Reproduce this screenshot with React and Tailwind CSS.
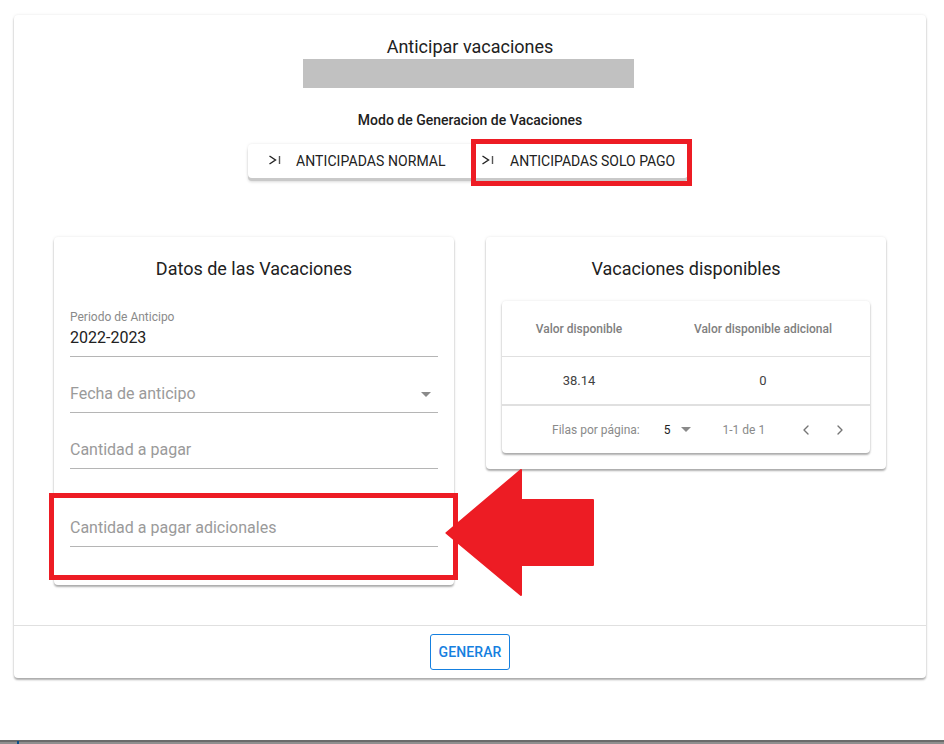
import React from "react";
import { ChevronLeft, ChevronRight } from "lucide-react";

function SkipIcon() {
  return (
    <svg width="14" height="14" viewBox="0 0 14 14" fill="none" stroke="#222" strokeWidth="1.4" className="shrink-0 mt-[3px]">
      <path d="M1.5 2 L7.5 6 L1.5 10" />
      <path d="M11.5 2 V10" stroke="#555" />
    </svg>
  );
}

function Caret({ className }) {
  return <span className={"w-0 h-0 border-x-[5px] border-x-transparent border-t-[5px] border-t-[#8a8a8a] " + className} />;
}

function Field({ label, value, caret, className }) {
  return (
    <div className={"relative h-[40px] border-b border-[#b5b5b5] " + className}>
      {value ? (
        <div className="flex flex-col">
          <span className="text-[12px] leading-[14px] text-[#8a8a8a] mt-[-7px]">{label}</span>
          <span className="text-[16px] leading-[24px] text-[#212121] mt-[2px]">{value}</span>
        </div>
      ) : (
        <div className="flex items-center justify-between pt-[9px] pr-[7px]">
          <span className="text-[16px] leading-[24px] text-[#9a9a9a]">{label}</span>
          {caret && <Caret className="mt-[1px]" />}
        </div>
      )}
    </div>
  );
}

export default function App() {
  return (
    <div className="relative w-[944px] h-[744px] overflow-hidden bg-white pt-[15px] pl-[14px] pr-[18px] font-['Roboto',sans-serif]">
      <div className="h-[663px] rounded-[4px] bg-white shadow-[0_2px_2px_rgba(0,0,0,0.3),0_0_3px_rgba(0,0,0,0.1)] flex flex-col">
        <div className="h-[610px] flex flex-col items-center">
          <div className="mt-[21px] text-[18px] leading-[22px] text-[#212121]">Anticipar vacaciones</div>
          <div className="mt-[1px] mr-[3px] w-[331px] h-[29px] bg-[#c1c1c1]" />
          <div className="mt-[22px] text-[14px] leading-[20px] font-medium text-[#212121]">Modo de Generacion de Vacaciones</div>
          <div className="mt-[14px] mb-[2px] mr-[4px] w-[440px] h-[34px] flex rounded-[4px] bg-white shadow-[0_3px_0_#c9c9c9,0_4px_3px_rgba(0,0,0,0.15),0_0_3px_rgba(0,0,0,0.1)]">
            <div className="w-[224px] flex items-start pl-[20px] pt-[7px] gap-[14px] text-[14px] leading-[20px] tracking-[0.08px] text-[#212121]">
              <SkipIcon />
              <span>ANTICIPADAS NORMAL</span>
            </div>
            <div className="flex-1 flex items-start pl-[9px] pt-[7px] gap-[15px] text-[14px] leading-[20px] text-[#212121]">
              <SkipIcon />
              <span>ANTICIPADAS SOLO PAGO</span>
            </div>
          </div>

          <div className="w-full mt-[57px] pl-[40px] flex items-start gap-[32px]">
            <div className="w-[400px] h-[348px] rounded-[4px] bg-white shadow-[0_2px_2px_rgba(0,0,0,0.3),0_0_3px_rgba(0,0,0,0.1)] px-[16px] pt-[21px]">
              <div className="text-center text-[18px] leading-[22px] text-[#212121]">Datos de las Vacaciones</div>
              <Field className="mt-[37px]" label="Periodo de Anticipo" value="2022-2023" />
              <Field className="mt-[16px]" label="Fecha de anticipo" caret />
              <Field className="mt-[16px]" label="Cantidad a pagar" />
              <Field className="mt-[38px]" label="Cantidad a pagar adicionales" />
            </div>

            <div className="w-[400px] h-[232px] rounded-[4px] bg-white shadow-[0_2px_2px_rgba(0,0,0,0.3),0_0_3px_rgba(0,0,0,0.1)] px-[16px] pt-[21px]">
              <div className="text-center text-[18px] leading-[22px] text-[#212121]">Vacaciones disponibles</div>
              <div className="mt-[21px] h-[152px] rounded-[4px] shadow-[0_2px_2px_rgba(0,0,0,0.3),0_0_3px_rgba(0,0,0,0.1)] flex flex-col">
                <div className="h-[56px] grid grid-cols-[154px_1fr] items-center text-center text-[12px] font-medium text-[#808080] border-b border-[#e0e0e0]">
                  <span>Valor disponible</span>
                  <span>Valor disponible adicional</span>
                </div>
                <div className="h-[49px] grid grid-cols-[154px_1fr] items-center text-center text-[13px] text-[#424242] border-b-2 border-[#e0e0e0]">
                  <span>38.14</span>
                  <span>0</span>
                </div>
                <div className="flex-1 flex items-center text-[12px] text-[#8a8a8a] pl-[50px]">
                  <span>Filas por página:</span>
                  <span className="ml-[24px] text-[12px] text-[#212121]">5</span>
                  <Caret className="ml-[10px]" />
                  <span className="ml-[32px]">1-1 de 1</span>
                  <ChevronLeft className="ml-[33px] text-[#757575]" size={16} />
                  <ChevronRight className="ml-[18px] text-[#757575]" size={16} />
                </div>
              </div>
            </div>
          </div>
        </div>
        <div className="flex-1 border-t border-[#e0e0e0] flex justify-center pt-[8px]">
          <div className="w-[80px] h-[36px] rounded-[3px] border border-[#1580e0] flex items-center justify-center text-[14px] font-medium tracking-[0.1px] text-[#1580e0]">GENERAR</div>
        </div>
      </div>

      <div className="absolute left-[471px] top-[139px] w-[221px] h-[47px] border-[5px] border-[#ed1c24]" />
      <div className="absolute left-[49px] top-[493px] w-[409px] h-[87px] border-[5px] border-[#ed1c24]" />
      <svg className="absolute left-[444px] top-[469px]" width="152" height="128" viewBox="0 0 152 128">
        <path d="M2.5 64 L77 1 V31 H149 V96 H77 V126 Z" fill="#ed1c24" stroke="#ed1c24" strokeWidth="2" strokeLinejoin="round" />
      </svg>
      <div className="absolute left-0 bottom-0 w-full h-[4px] border-t-2 border-[#6b6b6b] bg-[#8f8f8f]">
        <span className="absolute left-[17px] top-[-1px] w-[2px] h-[3px] bg-[#0b4f8a]" />
      </div>
    </div>
  );
}
